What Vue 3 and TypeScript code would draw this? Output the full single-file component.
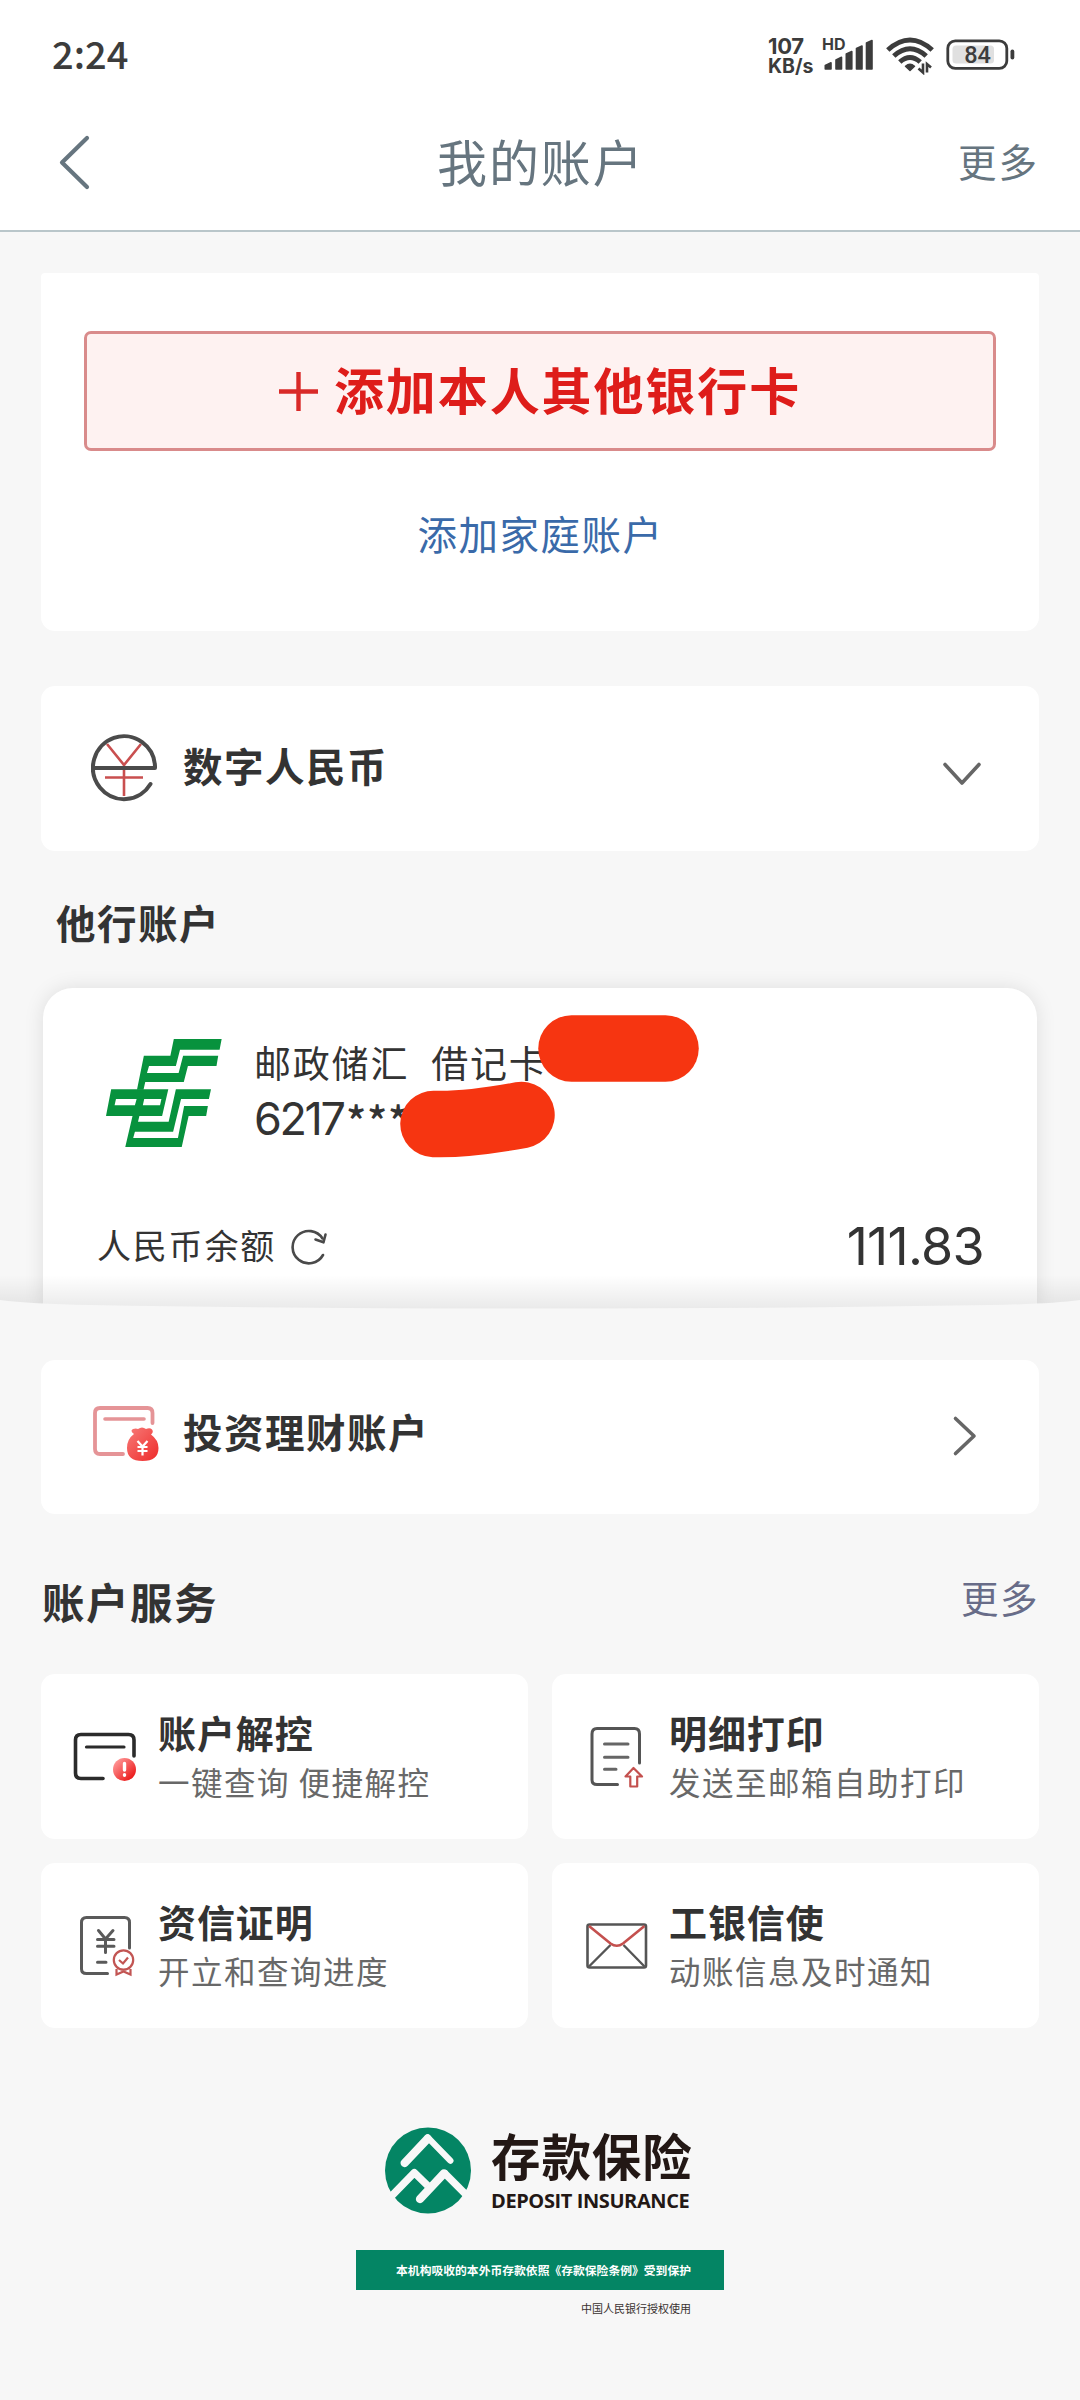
<script setup lang="ts">
interface Service {
  icon: 'card' | 'print' | 'proof' | 'mail'
  title: string
  desc: string
}

const services: Service[] = [
  { icon: 'card', title: '账户解控', desc: '一键查询 便捷解控' },
  { icon: 'print', title: '明细打印', desc: '发送至邮箱自助打印' },
  { icon: 'proof', title: '资信证明', desc: '开立和查询进度' },
  { icon: 'mail', title: '工银信使', desc: '动账信息及时通知' },
]
</script>

<template>
  <div class="page">
    <header class="header">
      <div class="status">
        <span class="clock">2:24</span>
        <div class="status-right">
          <div class="speed"><span class="speed-n">107</span><span class="speed-u">KB/s</span></div>
          <svg class="signal" width="52" height="40" viewBox="0 0 52 40">
            <text x="0" y="16" class="hd">HD</text>
            <g fill="#3c3c3c" stroke="#3c3c3c" stroke-width="1.600" stroke-linejoin="round">
              <path d="M3.300 31.500L9 28.800V35H3.300Z" />
              <path d="M14 26L19.500 23.300V35H14Z" />
              <path d="M24.300 20L29.800 17.500V35H24.300Z" />
              <path d="M34.500 14.500L40 12V35H34.500Z" />
              <path d="M44.500 9L50 6.500V35H44.500Z" />
            </g>
          </svg>
          <svg class="wifi" width="48" height="40" viewBox="0 0 48 40">
            <g fill="none" stroke="#3c3c3c" stroke-width="5">
              <path d="M1.800 15Q24 -5 46.200 15" />
              <path d="M7.800 21Q24 6.500 40.200 21" />
              <path d="M13.800 27Q24 18 34.200 27" />
            </g>
            <path d="M19.500 31.300q4.500-3.800 9 0L24 35.500z" fill="#3c3c3c" stroke="#3c3c3c" stroke-width="1.500" stroke-linejoin="round" />
            <path d="M37 28.500V37.500L32.500 33.500M41 37.500V29L45 32.500" fill="none" stroke="#3c3c3c" stroke-width="2.600" />
          </svg>
          <svg class="battery" width="70" height="32" viewBox="0 0 70 32">
            <rect x="1.800" y="1.800" width="59" height="27.600" rx="7.500" fill="none" stroke="#3c3c3c" stroke-width="2.800" />
            <rect x="6.500" y="6.500" width="41.500" height="18" rx="3.500" fill="#e0e0e0" />
            <rect x="64.500" y="10.500" width="3.800" height="10" rx="1.900" fill="#3c3c3c" />
            <text x="31.500" y="24" text-anchor="middle" class="pct">84</text>
          </svg>
        </div>
      </div>
      <div class="nav">
        <svg class="back" width="34" height="56" viewBox="0 0 34 56">
          <path d="M30 4L5 28.500L30 53" fill="none" stroke="#66757f" stroke-width="4.200" stroke-linecap="round" stroke-linejoin="round" />
        </svg>
        <span class="nav-title">我的账户</span>
        <span class="nav-more">更多</span>
      </div>
    </header>

    <main class="main">
      <section class="card add">
        <button class="add-btn">
          <svg width="39" height="39" viewBox="0 0 39 39"><path d="M19.500 0V39M0 19.500H39" stroke="#d92a28" stroke-width="4.400" /></svg>
          <span>添加本人其他银行卡</span>
        </button>
        <a class="add-link">添加家庭账户</a>
      </section>

      <section class="card digital">
        <svg class="ecny" width="66" height="68" viewBox="0 0 66 68">
          <g fill="none" stroke="#c94f4f" stroke-width="2.600">
            <path d="M16 10L33 31L50 10M33 31V62M14 43.500H52" />
          </g>
          <path d="M2 34H64A31 31.500 0 1 0 59.500 50" fill="none" stroke="#4b4b4b" stroke-width="4" stroke-linecap="round" stroke-linejoin="round" />
        </svg>
        <span class="row-title">数字人民币</span>
        <svg class="down" width="40" height="26" viewBox="0 0 40 26">
          <path d="M3 3.500L20 22L37 3.500" fill="none" stroke="#666" stroke-width="3.600" stroke-linecap="round" stroke-linejoin="round" />
        </svg>
      </section>

      <h2 class="other-title">他行账户</h2>
    </main>

    <section class="others">
      <div class="bank">
        <div class="bank-head">
          <svg class="psbc" width="116" height="108" viewBox="193 207 337 324" preserveAspectRatio="none">
            <g fill="#07923d" fill-rule="evenodd">
              <path d="M390 207H529L523 239H408L396 288H318L312 309H404L417 257H519L514 288H431L419 336H307L302 359H283L303 257H380Z" />
              <path d="M208 358H374L356 438H290L286 455H375L396 358H498L492 387H411L388 485H277L272 504H402L420 408H489L484 438H433L413 531H249L270 438H193ZM222 387L218 406H277L282 387ZM304 387L300 406H350L354 387Z" />
            </g>
          </svg>
          <div class="bank-info">
            <div class="bank-name"><span>邮政储汇</span><span class="kind">借记卡</span></div>
            <div class="bank-no"><span class="digits">6217</span><span class="stars">***</span></div>
          </div>
          <svg class="masks" width="304" height="148" viewBox="0 0 304 148">
            <g fill="none" stroke="#f63511" stroke-width="66.500" stroke-linecap="round">
              <path d="M171.500 38.500H265.500" />
              <path d="M33.500 114Q68 115 121.500 105" />
            </g>
          </svg>
        </div>
        <div class="balance">
          <span class="bal-label">人民币余额</span>
          <svg class="refresh" width="38" height="36" viewBox="0 0 38 36">
            <path d="M33 26A16.200 16.200 0 1 1 32.500 9.500" fill="none" stroke="#4a4a4a" stroke-width="2.600" stroke-linecap="round" />
            <path d="M25.500 10.500L33.500 13.300L35.500 5.500" fill="none" stroke="#4a4a4a" stroke-width="2.600" stroke-linecap="round" stroke-linejoin="round" />
          </svg>
          <span class="amount">111.83</span>
        </div>
      </div>
      <svg class="edge" width="1080" height="34" viewBox="0 0 1080 34">
        <defs>
          <linearGradient id="edgeShade" x1="0" y1="0" x2="0" y2="1">
            <stop offset="0" stop-color="#000" stop-opacity="0" />
            <stop offset="1" stop-color="#000" stop-opacity="0.085" />
          </linearGradient>
        </defs>
        <rect width="1080" height="34" fill="url(#edgeShade)" />
        <path d="M0 25Q30 29 90 30Q300 33.500 540 33.500T990 30Q1050 29 1080 25V34H0Z" fill="#f7f7f7" />
      </svg>
    </section>

    <main class="main">
      <section class="card invest">
        <svg class="bag" width="70" height="62" viewBox="0 0 70 62">
          <defs>
            <linearGradient id="bagFill" x1="0" y1="0" x2="1" y2="1">
              <stop offset="0" stop-color="#f77b78" />
              <stop offset="1" stop-color="#ee2a2a" />
            </linearGradient>
          </defs>
          <path d="M61.500 19V9Q61.500 4 56.500 4H9Q4 4 4 9V45Q4 50 9 50H32" fill="none" stroke="#e59497" stroke-width="3.800" stroke-linecap="round" />
          <path d="M14 15H53" stroke="#e59497" stroke-width="3.600" stroke-linecap="round" />
          <path d="M43 30Q38.500 26.500 42 25Q45 24 47 25Q51 22 55 25Q59 23.500 61 25.500Q63 28 60 30.500Q67.500 36 67.500 44Q67.500 57 51.500 57Q36 57 36 44Q36 35 43 30Z" fill="url(#bagFill)" />
          <path d="M46.500 37L51.500 42.500L56.500 37M51.500 42.500V51.500M46.500 43H56.500M46.500 47H56.500" fill="none" stroke="#fff" stroke-width="2.200" />
        </svg>
        <span class="row-title">投资理财账户</span>
        <svg class="right" width="26" height="42" viewBox="0 0 26 42">
          <path d="M3.500 3.500L22 21L3.500 38.500" fill="none" stroke="#666" stroke-width="3.600" stroke-linecap="round" stroke-linejoin="round" />
        </svg>
      </section>

      <div class="svc-head">
        <h2 class="svc-title">账户服务</h2>
        <span class="svc-more">更多</span>
      </div>

      <div class="grid">
        <div v-for="s in services" :key="s.title" class="card svc">
          <svg v-if="s.icon === 'card'" class="svc-icon" width="80" height="70" viewBox="0 0 80 70">
            <defs>
              <linearGradient id="dotFill" x1="0" y1="0" x2="1" y2="1">
                <stop offset="0.100" stop-color="#f99" />
                <stop offset="0.850" stop-color="#ec1c1c" />
              </linearGradient>
            </defs>
            <path d="M69 34V18Q69 12.500 63.500 12.500H16Q10.500 12.500 10.500 18V51Q10.500 56.500 16 56.500H38" fill="none" stroke="#2b2b2b" stroke-width="3.600" stroke-linecap="round" />
            <path d="M21.500 25H59" stroke="#2b2b2b" stroke-width="3.200" stroke-linecap="round" />
            <circle cx="59.500" cy="47.500" r="11.500" fill="url(#dotFill)" />
            <path d="M59.500 41.500V48M59.500 52.700V53.200" stroke="#fff" stroke-width="3.400" stroke-linecap="round" />
          </svg>
          <svg v-else-if="s.icon === 'print'" class="svc-icon" width="80" height="70" viewBox="0 0 80 70">
            <path d="M63.500 41V12Q63.500 6.500 58.500 6.500H21Q16 6.500 16 12V58Q16 62.500 21 62.500H41.500" fill="none" stroke="#555" stroke-width="3" stroke-linecap="round" />
            <path d="M28.500 22H52M28.500 35.300H52M28.500 47.300H40" stroke="#666" stroke-width="3" stroke-linecap="round" />
            <path d="M57.500 46L66 54.500H61.200V64.500H54.300V54.500H49.500Z" fill="none" stroke="#c4504e" stroke-width="2.200" stroke-linejoin="round" />
          </svg>
          <svg v-else-if="s.icon === 'proof'" class="svc-icon" width="80" height="70" viewBox="0 0 80 70">
            <g transform="translate(1.500 0)">
              <path d="M63 37V11.500Q63 6.500 58 6.500H20Q15 6.500 15 11.500V58Q15 62.500 20 62.500H41" fill="none" stroke="#5a5a5a" stroke-width="3" stroke-linecap="round" />
              <path d="M32 19.500L39 28L46.500 19.500M39 28V41.500M31 28.500H47.500M31 35.300H47.500M31 51.200H39.500" fill="none" stroke="#5a5a5a" stroke-width="3" stroke-linecap="round" />
              <g fill="none" stroke="#c25553" stroke-width="2.200">
                <circle cx="57" cy="49" r="9.700" />
                <path d="M52.500 49L56.500 52.500L61.500 46.500M50 58V63.500L57 60.500L64 63.500V58" />
              </g>
            </g>
          </svg>
          <svg v-else class="svc-icon" width="80" height="70" viewBox="0 0 80 70">
            <g transform="translate(3.500 0)">
              <path d="M9.500 55.500L31 34M65 55.500L44 34" stroke="#555" stroke-width="2.400" />
              <rect x="8" y="13.500" width="58.500" height="43" rx="2" fill="none" stroke="#555" stroke-width="2.600" />
              <path d="M9.500 15L31 32.500Q37.300 37 43.500 32.500L65 15" fill="none" stroke="#c4504e" stroke-width="2.600" />
            </g>
          </svg>
          <div class="svc-text">
            <span class="svc-name">{{ s.title }}</span>
            <span class="svc-desc">{{ s.desc }}</span>
          </div>
        </div>
      </div>
    </main>

    <footer class="deposit">
      <div class="dep-top">
        <svg width="86" height="87" viewBox="135 83 258 259">
          <circle cx="264" cy="212.500" r="129" fill="#048564" />
          <g fill="none" stroke="#f8f8f8" stroke-linejoin="round">
            <path d="M194 190L263 117" stroke-width="25" stroke-linecap="round" />
            <path d="M263 113L331 183" stroke-width="19" stroke-linecap="round" />
            <path d="M150 294L223 219L263 258" stroke-width="22" />
            <path d="M240 298L312 221" stroke-width="25" stroke-linecap="round" />
            <path d="M312 219L388 295" stroke-width="22" />
          </g>
        </svg>
        <div class="dep-names">
          <span class="dep-cn">存款保险</span>
          <span class="dep-en">DEPOSIT INSURANCE</span>
        </div>
      </div>
      <div class="dep-bar">本机构吸收的本外币存款依照《存款保险条例》受到保护</div>
      <div class="dep-auth">中国人民银行授权使用</div>
    </footer>
  </div>
</template>

<style>
body {
  margin: 0;
  background: #f7f7f7;
}
</style>

<style scoped>
.page {
  width: 1080px;
  height: 2400px;
  overflow: hidden;
  background: #f7f7f7;
  color: #333;
  font-family: "Noto Sans CJK SC", "Noto Sans", sans-serif;
}
.header {
  box-sizing: border-box;
  height: 232px;
  background: #fff;
  border-bottom: 2px solid #b9c6ca;
}
.status {
  display: flex;
  justify-content: space-between;
  align-items: flex-start;
  height: 100px;
}
.clock {
  margin: 28px 0 0 52px;
  font: 500 38px/50px "Noto Sans CJK SC", sans-serif;
  color: #3c3c3c;
}
.status-right {
  display: flex;
  align-items: flex-start;
  padding-right: 64px;
}
.speed {
  display: flex;
  flex-direction: column;
  width: 54px;
  margin-top: 36px;
  color: #3c3c3c;
  font-family: Inter, sans-serif;
  font-weight: 700;
}
.speed-n {
  font-size: 22px;
  line-height: 20px;
  letter-spacing: -0.3px;
}
.speed-u {
  font-size: 19.500px;
  line-height: 20px;
}
.signal {
  margin: 34px 12px 0 0;
}
.hd {
  font: 700 16px Inter, sans-serif;
  fill: #3c3c3c;
}
.wifi {
  margin: 35px 12px 0 0;
}
.battery {
  margin-top: 38.500px;
}
.pct {
  font: 500 23.500px Roboto, sans-serif;
  fill: #3c3c3c;
}
.nav {
  display: flex;
  align-items: flex-start;
  color: #66757f;
}
.back {
  margin: 34px 0 0 57px;
}
.nav-title {
  margin: 25px 0 0 346px;
  font-size: 50px;
  line-height: 70px;
  letter-spacing: 1.900px;
}
.nav-more {
  margin: 35px 41px 0 auto;
  font-size: 38.500px;
  line-height: 50px;
  letter-spacing: 2px;
}
.main {
  padding: 0 41px;
}
.card {
  box-sizing: border-box;
  background: #fff;
  border-radius: 14px;
}
.add {
  display: flex;
  flex-direction: column;
  align-items: center;
  height: 358px;
  margin-top: 41px;
  padding-top: 58px;
  border-radius: 4px 4px 14px 14px;
}
.add-btn {
  display: flex;
  align-items: center;
  justify-content: center;
  gap: 16px;
  box-sizing: border-box;
  width: 912px;
  height: 120px;
  padding: 0;
  border: 3px solid #d98b8b;
  border-radius: 7px;
  background: #fef2f1;
  color: #de1d1a;
  font: 700 50px/70px "Noto Sans CJK SC", sans-serif;
  letter-spacing: 1.900px;
}
.add-btn span {
  padding-bottom: 7px;
}
.add-link {
  margin-top: 57px;
  padding-left: 1px;
  color: #3a6aa9;
  font-size: 39.500px;
  line-height: 50px;
  letter-spacing: 1.500px;
}
.digital {
  display: flex;
  align-items: flex-start;
  height: 165px;
  margin-top: 55px;
  padding-left: 50px;
}
.ecny {
  margin-top: 48px;
}
.row-title {
  margin-left: 26px;
  font-size: 39.500px;
  font-weight: 700;
  line-height: 50px;
  letter-spacing: 1.500px;
}
.digital .row-title {
  margin-top: 54px;
}
.down {
  margin: 75px 57px 0 auto;
}
.other-title {
  margin: 0;
  padding: 46px 0 0 15px;
  height: 91px;
  font-size: 39.500px;
  font-weight: 700;
  line-height: 50px;
  letter-spacing: 1.500px;
}
.others {
  display: grid;
  height: 321px;
}
.others > * {
  grid-area: 1 / 1;
}
.bank {
  width: 994px;
  height: 321px;
  margin-left: 43px;
  background: #fff;
  border-radius: 30px 30px 0 0;
  box-shadow: 0 0 20px rgba(0, 0, 0, 0.1);
  clip-path: inset(-40px -40px 0 -40px);
}
.edge {
  align-self: end;
  position: relative;
}
.bank-head {
  position: relative;
  display: flex;
  align-items: flex-start;
  height: 225px;
}
.psbc {
  margin: 51px 0 0 63px;
}
.bank-info {
  margin: 48px 0 0 32px;
}
.bank-name {
  display: flex;
  font-size: 37px;
  line-height: 52px;
  letter-spacing: 1.800px;
}
.kind {
  margin-left: 22px;
}
.bank-no {
  display: flex;
  height: 60px;
  margin-top: 5px;
}
.digits {
  width: 92px;
  font: 400 45px/52px Inter, sans-serif;
  letter-spacing: -2.400px;
}
.stars {
  font: 500 42px/53px "Noto Sans CJK SC", sans-serif;
  letter-spacing: 0.700px;
}
.masks {
  position: absolute;
  left: 357px;
  top: 22px;
}
.balance {
  display: flex;
  align-items: flex-start;
}
.bal-label {
  margin: 7px 0 0 54px;
  font-size: 34px;
  line-height: 50px;
  letter-spacing: 1.800px;
}
.refresh {
  margin: 16px 0 0 14px;
}
.amount {
  margin: 1px 53px 0 auto;
  font: 400 52px/66px Inter, sans-serif;
  letter-spacing: -0.700px;
}
.invest {
  display: flex;
  align-items: flex-start;
  height: 154px;
  margin-top: 51px;
  padding-left: 50px;
}
.bag {
  margin-top: 44px;
}
.invest .row-title {
  margin: 46px 0 0 22px;
}
.right {
  margin: 55px 61px 0 auto;
}
.svc-head {
  display: flex;
  justify-content: space-between;
  align-items: flex-start;
  height: 160px;
}
.svc-title {
  margin: 57px 0 0 1px;
  font-size: 42.500px;
  font-weight: 700;
  line-height: 60px;
  letter-spacing: 1.500px;
}
.svc-more {
  margin-top: 58px;
  color: #686c88;
  font-size: 37.500px;
  line-height: 50px;
  letter-spacing: 1.500px;
}
.grid {
  display: grid;
  grid-template-columns: 487px 487px;
  gap: 24px;
}
.svc {
  display: flex;
  height: 165px;
  padding: 48px 0 0 24px;
}
.svc-icon {
  flex: none;
}
.svc-text {
  display: flex;
  flex-direction: column;
  margin: -14px 0 0 13px;
}
.svc-name {
  font-size: 38px;
  font-weight: 700;
  line-height: 48px;
  letter-spacing: 0.900px;
}
.svc-desc {
  margin-top: 3px;
  color: #686868;
  font-size: 31.500px;
  line-height: 44px;
  letter-spacing: 1.500px;
  white-space: nowrap;
}
.deposit {
  display: flex;
  flex-direction: column;
  width: 368px;
  margin: 99px 0 0 356px;
}
.dep-top {
  display: flex;
  align-items: flex-start;
  padding-left: 29px;
}
.dep-names {
  display: flex;
  flex-direction: column;
  margin-left: 20px;
  color: #231815;
}
.dep-cn {
  font-size: 49.500px;
  font-weight: 700;
  line-height: 60px;
  margin-top: -2px;
  letter-spacing: 0.900px;
}
.dep-en {
  margin-top: 3px;
  font: 700 20px/26px "Open Sans", sans-serif;
  letter-spacing: -0.400px;
  white-space: nowrap;
}
.dep-bar {
  box-sizing: border-box;
  height: 40px;
  margin-top: 36px;
  padding-right: 33px;
  background: #048564;
  color: #fff;
  font-size: 11.800px;
  font-weight: 700;
  line-height: 39px;
  text-align: right;
  white-space: nowrap;
}
.dep-auth {
  margin-top: 9px;
  padding-right: 33px;
  color: #3a3331;
  font-size: 11px;
  line-height: 18px;
  text-align: right;
}
</style>
